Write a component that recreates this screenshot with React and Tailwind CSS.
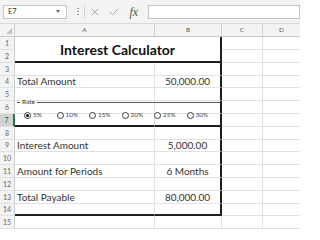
import { X, Check } from 'lucide-react';

// row heights alternate 13/12 so 15 rows fill the sheet area exactly
const heights = [
  'h-[13px]', 'h-[13px]', 'h-[13px]', 'h-[12px]', 'h-[13px]',
  'h-[13px]', 'h-[13px]', 'h-[13px]', 'h-[12px]', 'h-[13px]',
  'h-[13px]', 'h-[13px]', 'h-[13px]', 'h-[12px]', 'h-[13px]',
];

const data = {
  4: ['Total Amount', '50,000.00'],
  9: ['Interest Amount', '5,000.00'],
  11: ['Amount for Periods', '6 Months'],
  13: ['Total Payable', '80,000.00'],
};

const rates = ['5%', '10%', '15%', '20%', '25%', '30%'];

function RowHeader({ n }) {
  const active = n === 7;
  return (
    <div
      className={`${heights[n - 1]} flex items-center justify-center border-b border-b-[#e1e1e1] text-[7px] ${
        active
          ? 'bg-[#d2d2d2] text-[#217346] border-r-2 border-r-[#217346]'
          : 'border-r border-r-[#cdcdcd] text-[#666]'
      }`}
    >
      {n}
    </div>
  );
}

function SheetRow({ n }) {
  const [label, value] = data[n] || ['', ''];
  const inTable = n <= 14;
  const thick = n === 7 || n === 14;
  const bottom = thick ? 'border-b-2 border-b-[#1f1f1f]' : 'border-b border-b-[#e1e1e1]';
  return (
    <div className={`${heights[n - 1]} flex`}>
      <div className={`w-[140px] shrink-0 flex items-center pl-[2px] border-r border-r-[#e1e1e1] ${bottom}`}>
        {label}
      </div>
      <div
        className={`w-[67px] shrink-0 flex items-center justify-center ${bottom} ${
          inTable ? 'border-r-2 border-r-[#1f1f1f]' : 'border-r border-r-[#e1e1e1]'
        }`}
      >
        {value}
      </div>
      <div className="w-[41px] shrink-0 border-r border-b border-[#e1e1e1]" />
      <div className="flex-1 border-b border-[#e1e1e1]" />
    </div>
  );
}

function Radio({ label, checked }) {
  return (
    <div className="w-[32.5px] shrink-0 flex items-center gap-[2px]">
      <div className="w-[7px] h-[7px] rounded-full border border-[#3a3a3a] bg-white flex items-center justify-center">
        {checked && <div className="w-[3px] h-[3px] rounded-full bg-[#111]" />}
      </div>
      <span className="text-[6.5px] leading-none text-[#444]">{label}</span>
    </div>
  );
}

export default function App() {
  return (
    <div className="w-[300px] h-[229px] overflow-hidden bg-white font-['Lato',sans-serif] text-[#333] text-[10px]">
      {/* Formula bar */}
      <div className="h-[24px] flex items-center bg-[#f3f3f3] border-b border-[#d9d9d9]">
        <div className="ml-[3px] w-[64px] h-[14px] shrink-0 flex items-center justify-between pl-[4px] pr-[6px] bg-white border border-[#c6c6c6] text-[7.5px] text-[#333]">
          <span>E7</span>
          <span className="w-0 h-0 border-l-[2.5px] border-r-[2.5px] border-t-[3px] border-l-transparent border-r-transparent border-t-[#6b6b6b]" />
        </div>
        <div className="ml-[10px] flex flex-col gap-[1.5px]">
          <div className="w-[1.5px] h-[1.5px] bg-[#9a9a9a]" />
          <div className="w-[1.5px] h-[1.5px] bg-[#9a9a9a]" />
          <div className="w-[1.5px] h-[1.5px] bg-[#9a9a9a]" />
        </div>
        <div className="ml-[5px] w-[63px] h-[14px] shrink-0 flex items-center border-l border-[#d4d4d4]">
          <X className="ml-[4px] w-[12px] h-[12px] text-[#9a9a9a]" strokeWidth={1.5} />
          <Check className="ml-[7px] w-[12px] h-[12px] text-[#9a9a9a]" strokeWidth={1.5} />
          <span className="ml-[10px] font-['Liberation_Serif',serif] italic text-[12px] leading-none text-[#555]">fx</span>
        </div>
        <div className="ml-[1px] flex-1 h-[14px] bg-white border border-[#c6c6c6]" />
      </div>

      {/* Column headers */}
      <div className="h-[13px] flex bg-[#f3f3f3] border-b border-[#c9c9c9] text-[6.5px] text-[#555]">
        <div className="relative w-[15px] shrink-0 border-r border-[#d0d0d0]">
          <div className="absolute right-[2px] bottom-[2px] w-0 h-0 border-l-[6px] border-l-transparent border-b-[6px] border-b-[#c4c4c4]" />
        </div>
        <div className="w-[140px] shrink-0 flex items-center justify-center border-r border-[#d0d0d0]">A</div>
        <div className="w-[67px] shrink-0 flex items-center justify-center border-r border-[#d0d0d0]">B</div>
        <div className="w-[41px] shrink-0 flex items-center justify-center border-r border-[#d0d0d0]">C</div>
        <div className="flex-1 flex items-center justify-center">D</div>
      </div>

      {/* Sheet */}
      <div className="flex">
        <div className="w-[15px] shrink-0 flex flex-col bg-[#f3f3f3]">
          {heights.map((_, i) => (
            <RowHeader key={i} n={i + 1} />
          ))}
        </div>

        <div className="flex-1 flex flex-col">
          {/* Title, rows 1-2 merged */}
          <div className="h-[26px] flex">
            <div className="w-[207px] shrink-0 flex items-center justify-center border-r-2 border-b-2 border-[#1f1f1f] text-[14px] font-bold text-[#111]">
              Interest Calculator
            </div>
            <div className="w-[41px] shrink-0 flex flex-col">
              <div className="h-[13px] border-r border-b border-[#e1e1e1]" />
              <div className="h-[13px] border-r border-b border-[#e1e1e1]" />
            </div>
            <div className="flex-1 flex flex-col">
              <div className="h-[13px] border-b border-[#e1e1e1]" />
              <div className="h-[13px] border-b border-[#e1e1e1]" />
            </div>
          </div>

          <SheetRow n={3} />
          <SheetRow n={4} />

          {/* Rows 5-7 with the Rate group box over them */}
          <div className="relative">
            <SheetRow n={5} />
            <SheetRow n={6} />
            <SheetRow n={7} />
            <div className="absolute left-[2px] top-[10px] w-[203px] h-[8px] flex items-center">
              <div className="w-[3px] h-px bg-[#5a5a5a]" />
              <span className="px-[2px] text-[6.5px] leading-none text-[#333]">Rate</span>
              <div className="flex-1 h-px bg-[#5a5a5a]" />
            </div>
            <div className="absolute left-[9px] top-[24px] h-[7px] flex items-center">
              {rates.map((r, i) => (
                <Radio key={r} label={r} checked={i === 0} />
              ))}
            </div>
          </div>

          {[8, 9, 10, 11, 12, 13, 14, 15].map((n) => (
            <SheetRow key={n} n={n} />
          ))}
        </div>
      </div>
    </div>
  );
}
